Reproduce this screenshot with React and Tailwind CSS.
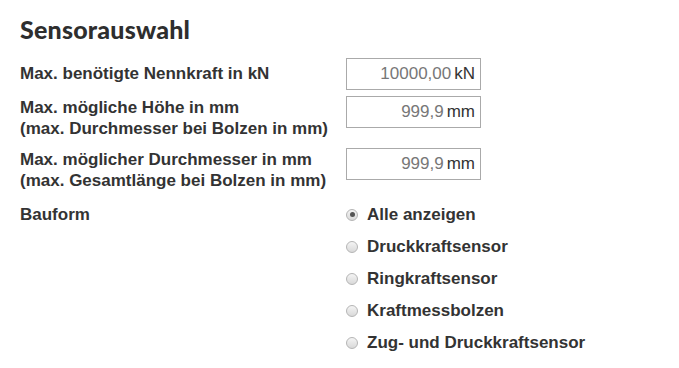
import React from 'react';

const options = [
  'Alle anzeigen',
  'Druckkraftsensor',
  'Ringkraftsensor',
  'Kraftmessbolzen',
  'Zug- und Druckkraftsensor',
];

function ValueBox({ value, unit }) {
  return (
    <div className="w-[135px] h-[32px] border border-[#aaaaaa] bg-white flex items-center justify-end pr-[5px] text-[17px]">
      <span className="text-[#777777]">{value}</span>
      <span className="text-[#333333] ml-[3px]">{unit}</span>
    </div>
  );
}

function Radio({ checked }) {
  return (
    <span className="w-[12px] h-[12px] rounded-full border border-[#b5b5b5] bg-gradient-to-b from-[#f4f4f4] to-[#d9d9d9] flex items-center justify-center shrink-0">
      {checked && <span className="w-[5px] h-[5px] rounded-full bg-[#555555]" />}
    </span>
  );
}

export default function App() {
  return (
    <div className="w-[679px] h-[368px] bg-white text-[#333333] font-['Liberation_Sans',Arial,sans-serif] pl-[20px] pt-[14px]">
      <h1 className="font-['Lato',sans-serif] font-black text-[25px] leading-[30px] tracking-[0.2px] text-[#2e2e2e]">
        Sensorauswahl
      </h1>

      <div className="mt-[14px] flex items-start">
        <div className="w-[326px] pt-[5px] text-[17px] leading-[21px] font-bold">Max. benötigte Nennkraft in kN</div>
        <ValueBox value="10000,00" unit="kN" />
      </div>

      <div className="mt-[6px] flex items-start">
        <div className="w-[326px] pt-[1px] text-[17px] leading-[21px] font-bold">
          Max. mögliche Höhe in mm<br />(max. Durchmesser bei Bolzen in mm)
        </div>
        <ValueBox value="999,9" unit="mm" />
      </div>

      <div className="mt-[9px] flex items-start">
        <div className="w-[326px] pt-[1px] text-[17px] leading-[21px] font-bold">
          Max. möglicher Durchmesser in mm<br />(max. Gesamtlänge bei Bolzen in mm)
        </div>
        <ValueBox value="999,9" unit="mm" />
      </div>

      <div className="mt-[13px] flex items-start">
        <div className="w-[326px] text-[17px] leading-[21px] font-bold">Bauform</div>
        <div className="flex flex-col gap-[11px]">
          {options.map((o, i) => (
            <label key={o} className="flex items-center gap-[9px] text-[17px] leading-[21px] font-bold">
              <Radio checked={i === 0} />
              <span>{o}</span>
            </label>
          ))}
        </div>
      </div>
    </div>
  );
}
